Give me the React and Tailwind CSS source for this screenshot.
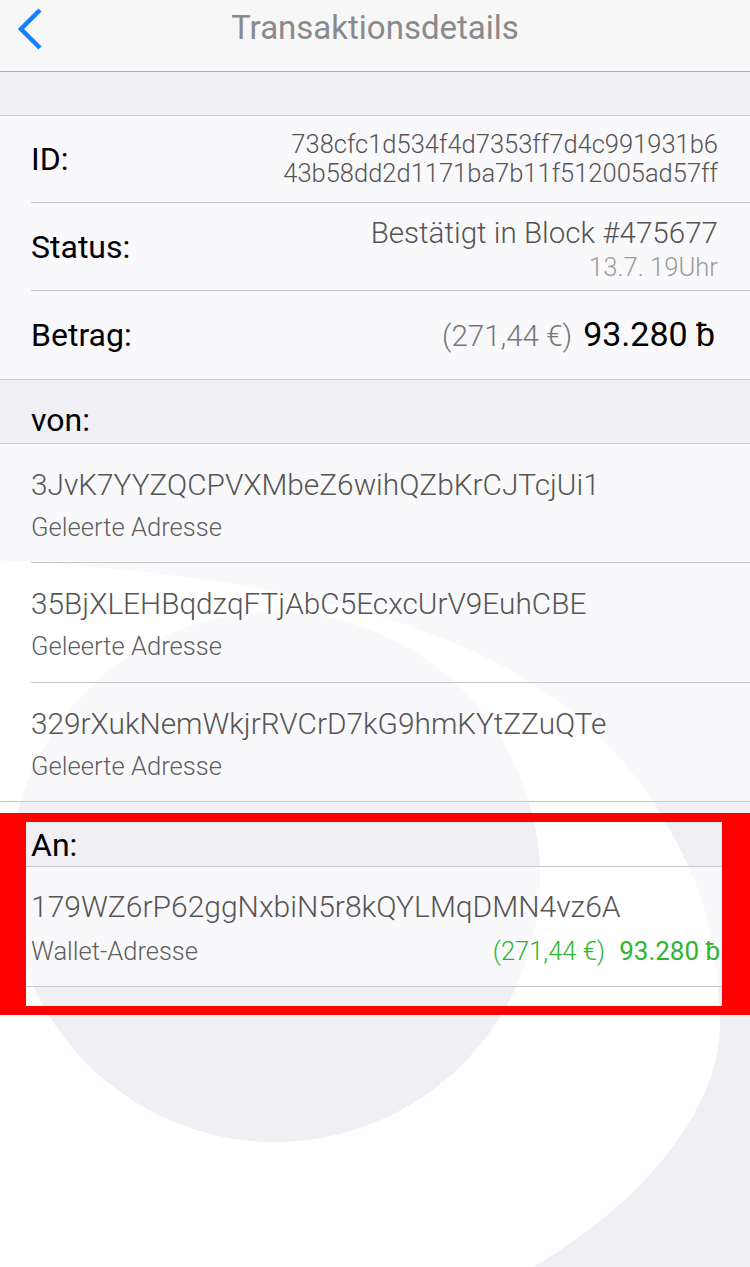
function Watermark() {
  return (
    <svg
      className="absolute left-0 top-0"
      width="750"
      height="1267"
      viewBox="0 0 750 1267"
      aria-hidden="true"
    >
      <path
        d="M 533 1267 C 640 1205 722 1110 720 1020 C 718 930 695 870 665 822 C 625 750 560 690 470 650 C 360 600 200 570 -10 560 L -10 1280 Z"
        fill="#ffffff"
      />
      <circle cx="275" cy="877" r="265" fill="#efeff4" />
    </svg>
  );
}

function NavBar() {
  return (
    <div className="h-[72px] border-b border-[#b2b2b2] bg-[#f7f7f8]">
      <div className="relative flex h-[56px] items-center justify-center">
        <svg
          className="absolute left-[14px] top-[6px]"
          width="32"
          height="46"
          viewBox="0 0 32 46"
          aria-hidden="true"
        >
          <polyline
            points="26,4 7,23 26,42"
            fill="none"
            stroke="#157efb"
            strokeWidth="4.5"
            strokeLinecap="butt"
            strokeLinejoin="miter"
          />
        </svg>
        <span className="text-[33px] leading-[40px] text-[#8a8a8a]">
          Transaktionsdetails
        </span>
      </div>
    </div>
  );
}

function Sep({ inset }) {
  return (
    <div className={inset ? "h-px bg-white/60" : "h-px bg-[#c8c7cc]"}>
      {inset ? <div className="ml-[31px] h-px bg-[#c8c7cc]" /> : null}
    </div>
  );
}

function AddressRow({ address, h }) {
  return (
    <div className={`${h} bg-white/60 pl-[31px] pr-[32px] pt-[24px]`}>
      <div className="text-[29.8px] font-light leading-[34px] text-[#555]">{address}</div>
      <div className="mt-[10px] text-[25.6px] font-light leading-[30px] text-[#5e5e5e]">
        Geleerte Adresse
      </div>
    </div>
  );
}

export default function App() {
  return (
    <div className="relative min-h-[1267px] w-[750px] overflow-hidden bg-[#efeff4] font-[Roboto,Liberation_Sans,sans-serif]">
      <Watermark />
      <div className="relative">
        <NavBar />
        <div className="h-[43px]" />
        <Sep />
        {/* ID */}
        <div className="flex h-[86px] items-center justify-between bg-white/60 pl-[31px] pr-[32px]">
          <span className="text-[32px] leading-[38px] text-black">ID:</span>
          <div className="text-right text-[25.5px] font-light leading-[29px] text-[#555]">
            <div>738cfc1d534f4d7353ff7d4c991931b6</div>
            <div>43b58dd2d1171ba7b11f512005ad57ff</div>
          </div>
        </div>
        <Sep inset />
        {/* Status */}
        <div className="flex h-[87px] items-center justify-between bg-white/60 pl-[31px] pr-[32px]">
          <span className="text-[32px] leading-[38px] text-black">Status:</span>
          <div className="pt-[6px] text-right font-light">
            <div className="text-[29.6px] leading-[34px] text-[#555]">Bestätigt in Block #475677</div>
            <div className="text-[25.6px] leading-[34px] text-[#9a9a9a]">13.7. 19Uhr</div>
          </div>
        </div>
        <Sep inset />
        {/* Betrag */}
        <div className="flex h-[88px] items-center justify-between bg-white/60 pl-[31px] pr-[35px]">
          <span className="text-[32px] leading-[38px] text-black">Betrag:</span>
          <div className="flex items-baseline gap-[11px]">
            <span className="text-[29.5px] font-light leading-[38px] text-[#777]">(271,44 €)</span>
            <span className="text-[34px] leading-[38px] text-black">93.280 ƀ</span>
          </div>
        </div>
        <Sep />
        {/* von header */}
        <div className="flex h-[63px] items-end pb-[4px] pl-[31px]">
          <span className="text-[32px] leading-[38px] text-black">von:</span>
        </div>
        <Sep />
        <AddressRow address="3JvK7YYZQCPVXMbeZ6wihQZbKrCJTcjUi1" h="h-[118px]" />
        <Sep inset />
        <AddressRow address="35BjXLEHBqdzqFTjAbC5EcxcUrV9EuhCBE" h="h-[119px]" />
        <Sep inset />
        <AddressRow address="329rXukNemWkjrRVCrD7kG9hmKYtZZuQTe" h="h-[118px]" />
        <Sep />
        {/* An header */}
        <div className="flex h-[64px] items-end pb-[2px] pl-[31px]">
          <span className="text-[32px] leading-[38px] text-black">An:</span>
        </div>
        <Sep />
        <div className="h-[119px] bg-white/60 pl-[31px] pr-[30px] pt-[23px]">
          <div className="text-[30px] font-light leading-[34px] text-[#555]">
            179WZ6rP62ggNxbiN5r8kQYLMqDMN4vz6A
          </div>
          <div className="mt-[12px] flex items-baseline justify-between leading-[30px]">
            <span className="text-[25.5px] font-light text-[#5e5e5e]">Wallet-Adresse</span>
            <div className="flex items-baseline gap-[14px] text-[#2eb52e]">
              <span className="text-[25.5px] font-light">(271,44 €)</span>
              <span className="text-[26px]">93.280 ƀ</span>
            </div>
          </div>
        </div>
        <Sep />
      </div>
      {/* red highlight frame overlay */}
      <div className="pointer-events-none absolute left-0 top-[813px] h-[202px] w-[750px] border-b-[9px] border-l-[26px] border-r-[28px] border-t-[9px] border-[#ff0000]" />
    </div>
  );
}
